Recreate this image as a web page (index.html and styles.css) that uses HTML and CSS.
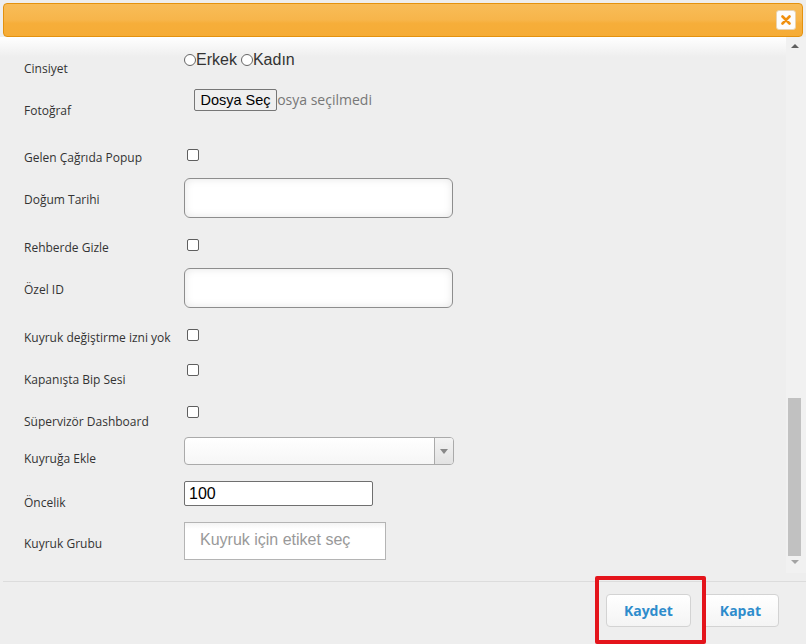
FILE: index.html
```html
<!DOCTYPE html>
<html lang="tr">
<head>
<meta charset="utf-8">
<title>Kullanıcı</title>
<link rel="stylesheet" href="styles.css">
</head>
<body>
<div class="dialog">
  <div class="titlebar">
    <button class="close" type="button" aria-label="Kapat">
      <svg width="10" height="10" viewBox="0 0 10 10"><path d="M1.5 1.5 L8.5 8.5 M8.5 1.5 L1.5 8.5" stroke="#f0900f" stroke-width="2.6" stroke-linecap="round"/></svg>
    </button>
  </div>
  <div class="content">
    <form class="form">
      <div class="row r-radio">
        <div class="lbl">Cinsiyet</div>
        <div class="ctl radios">
          <label class="radio"><input type="radio" name="g">Erkek</label>
          <label class="radio"><input type="radio" name="g">Kadın</label>
        </div>
      </div>
      <div class="row r-file">
        <div class="lbl">Fotoğraf</div>
        <div class="ctl file">
          <button type="button" class="filebtn">Dosya Seç</button><span class="filetxt">Dosya seçilmedi</span>
        </div>
      </div>
      <div class="row r-check">
        <div class="lbl">Gelen Çağrıda Popup</div>
        <div class="ctl"><input type="checkbox" class="cb"></div>
      </div>
      <div class="row r-input">
        <div class="lbl">Doğum Tarihi</div>
        <div class="ctl"><input type="text" class="big"></div>
      </div>
      <div class="row r-check">
        <div class="lbl">Rehberde Gizle</div>
        <div class="ctl"><input type="checkbox" class="cb"></div>
      </div>
      <div class="row r-input">
        <div class="lbl">Özel ID</div>
        <div class="ctl"><input type="text" class="big"></div>
      </div>
      <div class="row r-check">
        <div class="lbl">Kuyruk değiştirme izni yok</div>
        <div class="ctl"><input type="checkbox" class="cb"></div>
      </div>
      <div class="row r-check-tall">
        <div class="lbl">Kapanışta Bip Sesi</div>
        <div class="ctl"><input type="checkbox" class="cb"></div>
      </div>
      <div class="row r-check-tall">
        <div class="lbl">Süpervizör Dashboard</div>
        <div class="ctl"><input type="checkbox" class="cb"></div>
      </div>
      <div class="row r-select">
        <div class="lbl">Kuyruğa Ekle</div>
        <div class="ctl">
          <div class="select"><span class="sel-val"></span><span class="sel-arrow"><span class="tri-down"></span></span></div>
        </div>
      </div>
      <div class="row r-num">
        <div class="lbl">Öncelik</div>
        <div class="ctl"><input type="text" class="num" value="100"></div>
      </div>
      <div class="row r-tags">
        <div class="lbl">Kuyruk Grubu</div>
        <div class="ctl"><input type="text" class="tags" placeholder="Kuyruk için etiket seç"></div>
      </div>
    </form>
    <div class="scrollbar">
      <div class="sb-btn sb-up"><span class="tri-up"></span></div>
      <div class="sb-track"><div class="sb-thumb"></div></div>
      <div class="sb-btn sb-down"><span class="tri-sb-down"></span></div>
    </div>
  </div>
  <div class="footer">
    <button type="button" class="btn">Kaydet</button>
    <button type="button" class="btn">Kapat</button>
  </div>
  <div class="highlight"></div>
</div>
</body>
</html>
```
FILE: styles.css
```css
* { box-sizing: border-box; }
html, body { margin: 0; padding: 0; }
body {
  width: 806px;
  height: 644px;
  overflow: hidden;
  background: #eeeeee;
  font-family: "Open Sans", "DejaVu Sans", sans-serif;
  color: #333;
}
.dialog {
  position: relative;
  width: 806px;
  height: 644px;
}
.titlebar {
  margin: 3px 3px 0 3px;
  height: 34px;
  border: 1px solid #e4920f;
  border-radius: 4px;
  background: linear-gradient(to bottom, #f8bc58 0%, #f7b54a 50%, #f6ae3a 60%, #f6ac36 100%);
  display: flex;
  justify-content: flex-end;
  align-items: center;
  padding-right: 6px;
}
.close {
  width: 20px;
  height: 20px;
  padding: 0;
  margin: 0;
  border: 1px solid #e9d3b0;
  border-radius: 3px;
  background: #fdfdfd;
  display: flex;
  align-items: center;
  justify-content: center;
}
.content {
  height: 544px;
  display: flex;
  background: linear-gradient(to bottom, #ffffff 0px, #eeeeee 20px, #eeeeee 100%);
}
.form {
  flex: 1;
  padding-left: 24px;
  margin: 0;
}
.row {
  display: flex;
  align-items: flex-start;
}
.lbl {
  width: 160px;
  font-size: 12px;
  line-height: 16px;
  color: #333;
  white-space: nowrap;
}
.r-radio { height: 47px; }
.r-radio .lbl { margin-top: 24px; }
.r-radio .ctl { margin-top: 14px; }
.r-file { height: 56px; }
.r-file .lbl { margin-top: 19px; }
.r-file .ctl { margin-top: 5px; }
.r-check { height: 32px; }
.r-check .lbl { margin-top: 10px; }
.r-check .ctl { margin-top: 9px; }
.r-input { height: 58px; }
.r-input .lbl { margin-top: 20px; }
.r-input .ctl { margin-top: 6px; }
.r-check-tall { height: 42px; }
.r-check-tall .lbl { margin-top: 20px; }
.r-check-tall .ctl { margin-top: 12px; }
.r-select { height: 40px; }
.r-select .lbl { margin-top: 15px; }
.r-select .ctl { margin-top: 1px; }
.r-num { height: 40px; }
.r-num .lbl { margin-top: 19px; }
.r-num .ctl { margin-top: 5px; }
.r-tags .lbl { margin-top: 20px; }
.r-tags .ctl { margin-top: 6px; }

.radios {
  display: flex;
  font-family: "Liberation Sans", Arial, sans-serif;
  font-size: 16px;
  line-height: 18px;
  color: #333;
}
.radio { display: flex; align-items: center; margin-right: 4px; }
.radio input {
  appearance: none;
  -webkit-appearance: none;
  width: 12px;
  height: 12px;
  margin: 0;
  border: 1px solid #666;
  border-radius: 50%;
  background: #fff;
}
.file { display: flex; align-items: center; }
.filebtn {
  position: relative;
  z-index: 1;
  margin: 0 0 0 10px;
  width: 83px;
  height: 22px;
  padding: 0;
  border: 1px solid #767676;
  border-radius: 2px;
  background: #efefef;
  font-family: "Liberation Sans", Arial, sans-serif;
  font-size: 14.5px;
  color: #000;
  line-height: 18px;
  text-align: center;
}
.filetxt {
  margin-left: -10px;
  font-size: 14px;
  color: #777;
  line-height: 20px;
}
.cb {
  appearance: none;
  -webkit-appearance: none;
  display: block;
  width: 12px;
  height: 12px;
  margin: 0 0 0 3px;
  border: 1px solid #5f5f5f;
  border-radius: 2px;
  background: #fff;
}
.big {
  display: block;
  width: 269px;
  height: 40px;
  margin: 0;
  border: 1px solid #8d8d8d;
  border-radius: 6px;
  background: #fff;
  box-shadow: inset 0 0 8px rgba(0,0,0,0.10);
  outline: none;
}
.select {
  width: 270px;
  height: 28px;
  display: flex;
  border: 1px solid #aaaaaa;
  border-radius: 4px;
  background: linear-gradient(to bottom, #ffffff 0%, #f6f6f6 100%);
  overflow: hidden;
}
.sel-val { flex: 1; }
.sel-arrow {
  width: 19px;
  border-left: 1px solid #aaaaaa;
  background: linear-gradient(to bottom, #f3f3f3 0%, #e2e2e2 100%);
  display: flex;
  align-items: center;
  justify-content: center;
}
.tri-down {
  width: 0; height: 0;
  border-left: 4px solid transparent;
  border-right: 4px solid transparent;
  border-top: 5px solid #888;
}
.num {
  display: block;
  width: 189px;
  height: 25px;
  margin: 0;
  padding: 0 4px;
  border: 1px solid #6f6f6f;
  border-radius: 2px;
  background: #fff;
  font-family: "Liberation Sans", Arial, sans-serif;
  font-size: 16px;
  color: #000;
  outline: none;
}
.tags {
  display: block;
  width: 202px;
  height: 38px;
  margin: 0;
  padding: 0 0 2px 15px;
  border: 1px solid #b4b4b4;
  background: linear-gradient(to bottom, #f4f4f4 0px, #ffffff 6px, #ffffff 100%);
  font-family: "Liberation Sans", Arial, sans-serif;
  font-size: 16px;
  color: #333;
  outline: none;
}
.tags::placeholder { color: #999; }

.scrollbar {
  width: 20px;
  height: 536px;
  background: #f1f1f1;
  display: flex;
  flex-direction: column;
}
.sb-btn {
  height: 17px;
  display: flex;
  justify-content: center;
  align-items: center;
}
.tri-up {
  width: 0; height: 0;
  margin-left: -2px;
  border-left: 4px solid transparent;
  border-right: 4px solid transparent;
  border-bottom: 4px solid #606060;
}
.tri-sb-down {
  width: 0; height: 0;
  margin-left: -2px;
  margin-top: -6px;
  border-left: 4px solid transparent;
  border-right: 4px solid transparent;
  border-top: 4px solid #a3a3a3;
}
.sb-track {
  flex: 1;
  display: flex;
  flex-direction: column;
  justify-content: flex-end;
  padding-left: 2px;
}
.sb-thumb {
  width: 13px;
  height: 158px;
  background: #c1c1c1;
}

.footer {
  margin-left: 3px;
  height: 63px;
  border-top: 1px solid #dcdcdc;
  display: flex;
  justify-content: flex-end;
  align-items: flex-start;
  padding: 12px 27px 0 0;
  gap: 11px;
}
.btn {
  height: 33px;
  padding: 0 17px;
  margin: 0;
  border: 1px solid #d3d3d3;
  border-radius: 4px;
  background: linear-gradient(to bottom, #ffffff 0%, #f4f4f4 100%);
  font-family: "Open Sans", sans-serif;
  font-weight: 700;
  font-size: 14px;
  color: #2e8ccc;
}
.highlight {
  position: absolute;
  left: 595px;
  top: 573px;
  width: 111px;
  height: 68px;
  border: 4px solid #e4141b;
  border-radius: 2px;
  pointer-events: none;
}
```
